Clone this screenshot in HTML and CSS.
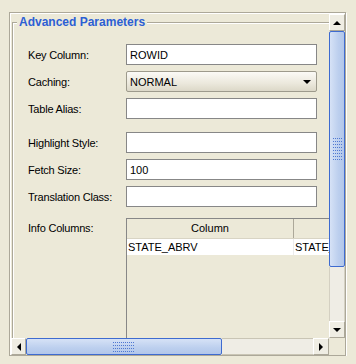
FILE: index.html
```html
<!DOCTYPE html>
<html lang="en">

<head>
    <meta charset="UTF-8">
    <title>Advanced Parameters</title>
    <link rel="stylesheet" href="styles.css">
</head>

<body>
    <div class="scroll-pane">
        <div class="viewport">
            <div class="panel">
                <div class="group">
                    <div class="group-title">Advanced Parameters</div>
                    <div class="form">
                        <div class="row">
                            <label>Key Column:</label>
                            <input type="text" class="field" value="ROWID">
                        </div>
                        <div class="row">
                            <label>Caching:</label>
                            <div class="combo"><span>NORMAL</span><span class="arrow-down"></span></div>
                        </div>
                        <div class="row">
                            <label>Table Alias:</label>
                            <input type="text" class="field" value="">
                        </div>
                        <div class="row row-spaced">
                            <label>Highlight Style:</label>
                            <input type="text" class="field" value="">
                        </div>
                        <div class="row">
                            <label>Fetch Size:</label>
                            <input type="text" class="field" value="100">
                        </div>
                        <div class="row">
                            <label>Translation Class:</label>
                            <input type="text" class="field" value="">
                        </div>
                        <div class="row row-table">
                            <label>Info Columns:</label>
                            <div class="table-pane">
                                <div class="table-head">
                                    <div class="th">Column</div>
                                    <div class="th th-wide"></div>
                                </div>
                                <div class="tr">
                                    <div class="td">STATE_ABRV</div>
                                    <div class="td td-wide">STATE_ABRV</div>
                                </div>
                            </div>
                        </div>
                    </div>
                </div>
            </div>
        </div>

        <div class="vscroll">
            <div class="sb-btn"><span class="arrow-up"></span></div>
            <div class="sb-thumb"><span class="grip"></span></div>
            <div class="sb-track"></div>
            <div class="sb-btn"><span class="arrow-down"></span></div>
        </div>

        <div class="hscroll">
            <div class="sb-btn sb-btn-left"><span class="arrow-left"></span></div>
            <div class="sb-thumb"><span class="grip"></span></div>
            <div class="sb-track"></div>
            <div class="sb-btn"><span class="arrow-right"></span></div>
        </div>

        <div class="corner"></div>
    </div>
</body>

</html>
```

FILE: styles.css
```css
body {
    margin: 0;
    background-color: #ece9d8;
    font-family: 'Liberation Sans', Arial, sans-serif;
    font-size: 11px;
    color: #000;
}

/* outer scroll pane, etched border */
.scroll-pane {
    box-sizing: border-box;
    margin: 12px 0 0 9px;
    width: 337px;
    height: 344px;
    padding: 1px 0 0 1px;
    border: 1px solid #aca899;
    box-shadow: inset 1px 1px 0 #fff, 1px 1px 0 #fff;
    display: grid;
    grid-template-columns: 318px 16px;
    grid-template-rows: 324px 17px;
}

.viewport {
    overflow: hidden;
}

.panel {
    width: 470px;
    padding-left: 1px;
}

/* titled border */
.group {
    margin-top: 8px;
    border-top: 1px solid #aca899;
    border-left: 1px solid #aca899;
    box-shadow: inset 1px 1px 0 #fff;
}

.group-title {
    width: fit-content;
    margin: -9px 0 0 4px;
    padding: 0 2px;
    background-color: #ece9d8;
    color: #2c5fd4;
    font-size: 12px;
    font-weight: bold;
    line-height: 16px;
}

.form {
    padding: 14px 0 10px 15px;
}

.row {
    display: flex;
    align-items: center;
    margin-top: 6px;
}

.row:first-child {
    margin-top: 0;
}

.row-spaced {
    margin-top: 13px;
}

.row label {
    width: 98px;
    flex: none;
    letter-spacing: -0.2px;
}

.field,
.combo {
    box-sizing: border-box;
    width: 191px;
    height: 21px;
    margin: 0;
    padding: 0 3px;
    border: 1px solid #878787;
    background-color: #fff;
    font-family: inherit;
    font-size: 11px;
    color: #000;
    outline: none;
}

.combo {
    display: flex;
    align-items: center;
    justify-content: space-between;
    padding-right: 5px;
    border-color: #9d9a8c;
    border-radius: 2px;
    background: linear-gradient(#fbfaf6, #ebe8dc 60%, #dcd8c8);
}

.row-table {
    align-items: flex-start;
    margin-top: 11px;
}

.row-table label {
    line-height: 20px;
}

/* info columns table */
.table-pane {
    flex: none;
    width: 320px;
    height: 160px;
    border-top: 1px solid #878787;
    border-left: 1px solid #878787;
}

.table-head {
    display: flex;
    height: 19px;
    border-bottom: 1px solid #d8d4c4;
}

.th {
    box-sizing: border-box;
    flex: none;
    width: 167px;
    border-right: 1px solid #aca899;
    text-align: center;
    line-height: 19px;
}

.th-wide,
.td-wide {
    width: 140px;
    border-right: none;
}

.tr {
    display: flex;
    height: 16px;
    background-color: #fff;
}

.td {
    box-sizing: border-box;
    flex: none;
    width: 167px;
    padding-left: 1px;
    border-right: 1px solid #ececec;
    line-height: 16px;
}

.td-wide {
    padding-left: 1px;
}

/* scroll bars */
.vscroll {
    display: flex;
    flex-direction: column;
}

.hscroll {
    display: flex;
}

.sb-btn {
    box-sizing: border-box;
    display: flex;
    align-items: center;
    justify-content: center;
    flex: none;
    background-color: #efede3;
    border: 1px solid;
    border-color: #fff #aca899 #aca899 #fff;
}

.vscroll .sb-btn {
    height: 17px;
}

.hscroll .sb-btn {
    width: 16px;
}

.hscroll .sb-btn-left {
    width: 15px;
}

.sb-thumb {
    box-sizing: border-box;
    display: flex;
    align-items: center;
    justify-content: center;
    flex: none;
    border: 1px solid #3e6bd0;
    border-radius: 2px;
}

.vscroll .sb-thumb {
    height: 236px;
    background: linear-gradient(to right, #d6e2f6, #bccfee 60%, #b2c6ea);
}

.hscroll .sb-thumb {
    width: 196px;
    background: linear-gradient(#d6e2f6, #bccfee 60%, #b2c6ea);
}

.grip {
    background: conic-gradient(at 1px 1px, transparent 75%, #4f78d2 0) 0 0 / 2px 3px;
}

.vscroll .grip {
    width: 9px;
    height: 22px;
}

.hscroll .grip {
    width: 22px;
    height: 10px;
}

.sb-track {
    flex: 1;
    background-color: #efede5;
}

.vscroll .sb-track {
    border-left: 1px solid #d4d0c2;
    border-right: 1px solid #d4d0c2;
}

.hscroll .sb-track {
    border-top: 1px solid #c9c5b5;
    border-bottom: 1px solid #c9c5b5;
}

.corner {
    background-color: #ece9d8;
}

/* arrow glyphs */
.arrow-up,
.arrow-down,
.arrow-left,
.arrow-right {
    width: 0;
    height: 0;
}

.arrow-up {
    border-left: 4px solid transparent;
    border-right: 4px solid transparent;
    border-bottom: 4px solid #000;
}

.arrow-down {
    border-left: 4px solid transparent;
    border-right: 4px solid transparent;
    border-top: 4px solid #000;
}

.arrow-left {
    border-top: 4px solid transparent;
    border-bottom: 4px solid transparent;
    border-right: 4px solid #000;
}

.arrow-right {
    border-top: 4px solid transparent;
    border-bottom: 4px solid transparent;
    border-left: 4px solid #000;
}
```
